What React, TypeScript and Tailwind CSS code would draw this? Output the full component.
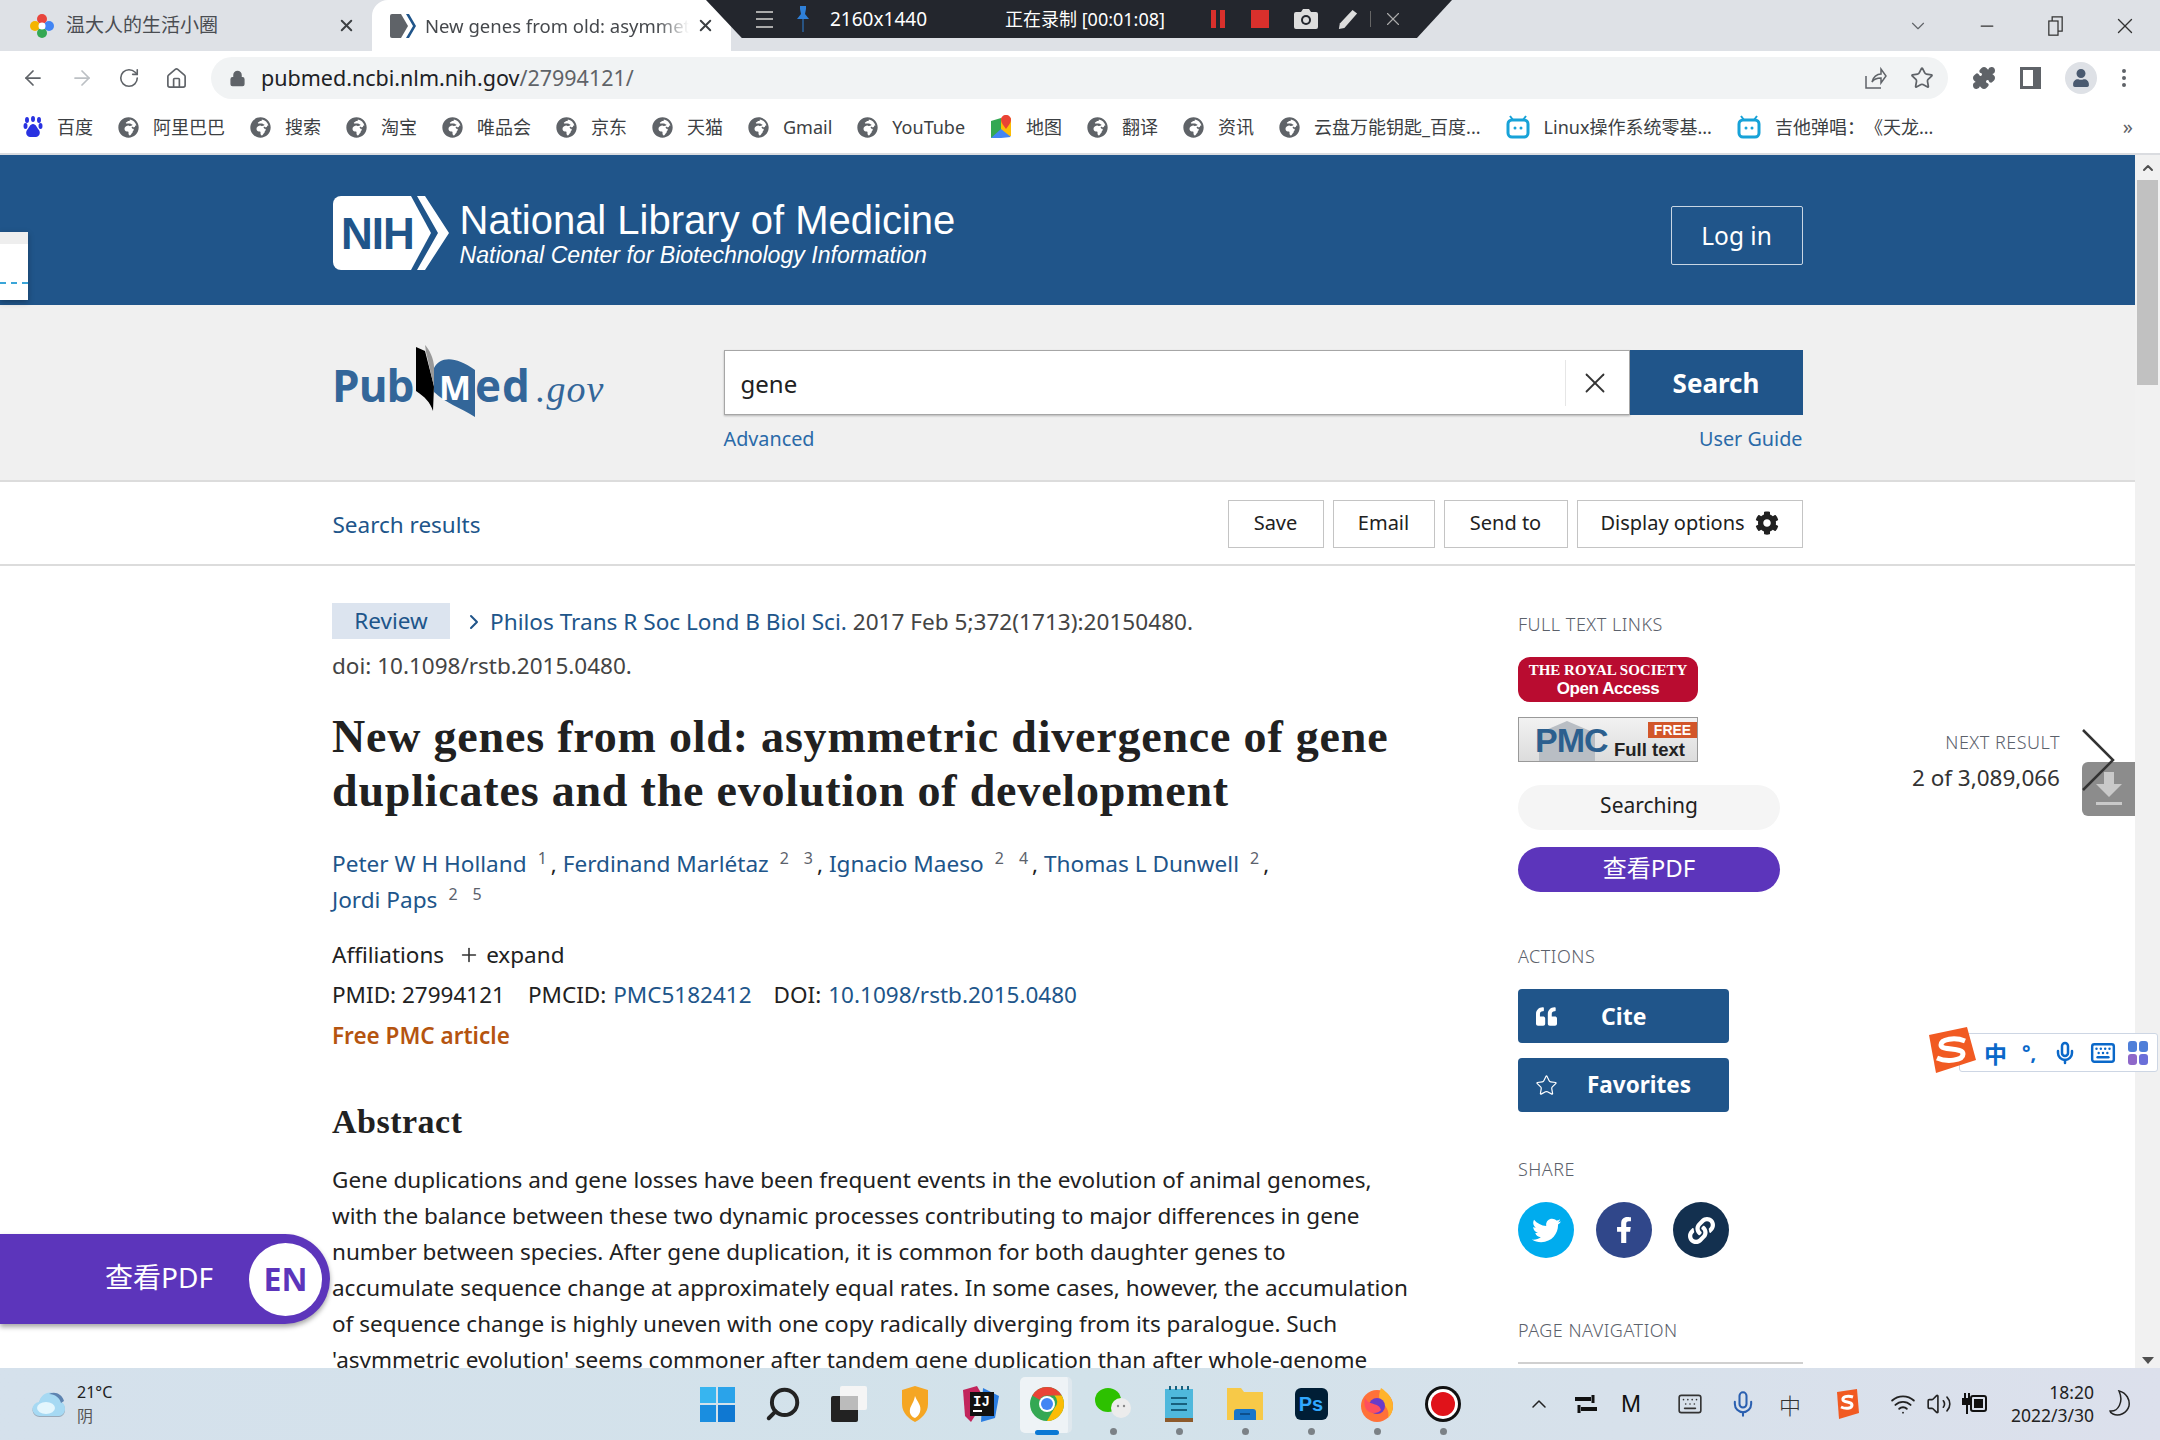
import React from "react";
import { ArrowLeft, ArrowRight, RotateCw, Home, Lock, Star, Puzzle, MoreVertical, X, Minus, ChevronDown, ChevronUp, ChevronRight, Plus, Wifi, Volume2, Mic, Keyboard, Search } from "lucide-react";
import { FaTwitter, FaFacebookF, FaLink, FaCog, FaGlobeAfrica, FaQuoteLeft, FaUser } from "react-icons/fa";

const bookmarks = [
  { label: "百度", icon: "baidu" },
  { label: "阿里巴巴" },
  { label: "搜索" },
  { label: "淘宝" },
  { label: "唯品会" },
  { label: "京东" },
  { label: "天猫" },
  { label: "Gmail" },
  { label: "YouTube" },
  { label: "地图", icon: "map" },
  { label: "翻译" },
  { label: "资讯" },
  { label: "云盘万能钥匙_百度..." },
  { label: "Linux操作系统零基...", icon: "bili" },
  { label: "吉他弹唱：《天龙...", icon: "bili" },
];

const BookmarkIcon = ({ icon }: { icon?: string }) => {
  if (icon === "baidu") {
    return (
      <svg width="20" height="22" viewBox="0 0 20 22" fill="#2932e1">
        <ellipse cx="4" cy="4" rx="2" ry="3" />
        <ellipse cx="10" cy="3" rx="2" ry="3" />
        <ellipse cx="16" cy="4" rx="2" ry="3" />
        <ellipse cx="2.5" cy="10" rx="2" ry="3" />
        <ellipse cx="17.5" cy="10" rx="2" ry="3" />
        <path d="M10 8c3 0 4 4 6 6 2 3 0 7-3 7H7c-3 0-5-4-3-7 2-2 3-6 6-6z" />
      </svg>
    );
  }
  if (icon === "map") {
    return (
      <svg width="22" height="24" viewBox="0 0 22 24">
        <path d="M1 6l10-3v18L1 23z" fill="#34a853" />
        <path d="M11 3l10 0v18H11z" fill="#fbbc05" />
        <path d="M1 23l10-9 10 8-10 1z" fill="#4285f4" />
        <path d="M16 0c3 0 5 2 5 5 0 3-3 6-5 9-2-3-5-6-5-9 0-3 2-5 5-5z" fill="#ea4335" />
      </svg>
    );
  }
  if (icon === "bili") {
    return (
      <svg width="24" height="24" viewBox="0 0 24 24" fill="none">
        <path d="M7 5L4 1M17 5l3-4" stroke="#17a2d8" strokeWidth="2" />
        <rect x="2" y="5" width="20" height="17" rx="4" stroke="#17a2d8" strokeWidth="3" />
        <circle cx="9" cy="13" r="1.5" fill="#17a2d8" />
        <circle cx="15" cy="13" r="1.5" fill="#17a2d8" />
      </svg>
    );
  }
  return <FaGlobeAfrica className="w-[21px] h-[21px] text-[#5f6368]" />;
};

const NihLogo = () => (
  <svg width="116" height="74" viewBox="0 0 116 74" className="shrink-0">
    <path d="M8 0H78L98 37 78 74H8a8 8 0 0 1-8-8V8a8 8 0 0 1 8-8z" fill="#fff" />
    <path d="M84 0h8l24 37-24 37h-8l21-37z" fill="#fff" />
    <text x="8" y="53" fontFamily="Liberation Sans" fontWeight="700" fontSize="44" letterSpacing="-1" fill="#20558a">NIH</text>
  </svg>
);

const PubMedLogo = () => (
  <svg width="280" height="85" viewBox="33 20 280 85" className="shrink-0 -mt-[10px]">
    <text x="32" y="82" fontFamily="Open Sans" fontWeight="700" fontSize="44" letterSpacing="-1" fill="#336699">Pub</text>
    <path d="M116 27l9 4 9 35-1 25c-3-9-8-14-17-20z" fill="#000" />
    <path d="M125 25c4 4 9 14 9 22v20l-8-35z" fill="#999" />
    <path d="M134 48c6-12 22-12 41 2v47c-14-9-30-14-41-25z" fill="#336699" />
    <text x="139" y="80" fontFamily="Open Sans" fontWeight="700" fontSize="34" fill="#fff">M</text>
    <text x="175" y="82" fontFamily="Open Sans" fontWeight="700" fontSize="44" letterSpacing="1" fill="#336699">ed</text>
    <text x="236" y="82" fontFamily="Liberation Serif" fontStyle="italic" fontSize="38" letterSpacing="1" fill="#336699">.gov</text>
  </svg>
);

const SideHeading = ({ children }: { children: React.ReactNode }) => (
  <h3 className="text-[18px] leading-[24px] font-light tracking-[0.5px] text-[#5b616b]">{children}</h3>
);

const Sup = ({ children }: { children: React.ReactNode }) => (
  <sup className="text-[16px] leading-none text-[#5b616b] ml-[11px] mr-[4px] top-[-8px]">{children}</sup>
);

const ToolButton = ({ children, width }: { children: React.ReactNode; width: string }) => (
  <button className={`h-[48px] ${width} border border-[#c4c4c4] bg-white text-[20px] text-[#212121] flex items-center justify-center gap-[10px] pb-[1px]`}>
    {children}
  </button>
);

const TaskSlot = ({ children }: { children: React.ReactNode }) => (
  <div className="w-[66px] h-full flex items-center justify-center relative">{children}</div>
);

const Dot = () => <span className="absolute bottom-[5px] w-[7px] h-[7px] rounded-full bg-[#7b8186]" />;

export default function App() {
  return (
    <div className="relative w-[2160px] h-[1440px] overflow-hidden flex flex-col bg-white font-['Noto_Sans','Noto_Sans_CJK_SC',sans-serif] text-[#212121]">
      {/* tab strip */}
      <div className="h-[51px] shrink-0 bg-[#dee1e6] flex items-end">
        <div className="w-[372px] h-[51px] flex items-center pl-[30px] pr-[16px]">
          <svg width="24" height="26" viewBox="0 0 24 26">
            <circle cx="12" cy="6" r="5" fill="#e8453c" />
            <circle cx="5" cy="13" r="5" fill="#f4b400" />
            <circle cx="19" cy="13" r="5" fill="#4285f4" />
            <circle cx="12" cy="20" r="5" fill="#34a853" />
            <circle cx="12" cy="13" r="3.5" fill="#fff" />
          </svg>
          <span className="ml-[12px] text-[19px] text-[#4a4d52]">温大人的生活小圈</span>
          <X className="ml-auto w-[19px] h-[19px] text-[#3c4043]" strokeWidth={2.5} />
        </div>
        <div className="w-[359px] h-[51px] bg-white rounded-t-[16px] flex items-center pl-[18px] pr-[16px]">
          <svg width="26" height="24" viewBox="0 0 26 24" className="shrink-0">
            <path d="M0 2a2 2 0 0 1 2-2h9l7 12-7 12H2a2 2 0 0 1-2-2z" fill="#5f6368" />
            <path d="M16 0h3l7 12-7 12h-3l7-12z" fill="#20558a" />
          </svg>
          <span className="ml-[9px] w-[264px] overflow-hidden whitespace-nowrap text-[18.5px] text-[#45484c] [mask-image:linear-gradient(to_right,black_88%,transparent)]">New genes from old: asymmetric</span>
          <X className="ml-auto w-[19px] h-[19px] text-[#3c4043]" strokeWidth={2.5} />
        </div>
        <div className="flex-1 h-[51px] flex items-center justify-end">
          <ChevronDown className="w-[22px] h-[22px] text-[#5f6368] mr-[48px]" strokeWidth={1.25} />
          <Minus className="w-[20px] h-[20px] text-[#333] mr-[51px]" strokeWidth={1.5} />
          <svg width="15" height="24" viewBox="0 0 18 24" fill="none" stroke="#333" strokeWidth="1.5" className="mr-[49px]">
            <rect x="1" y="6" width="11" height="17" />
            <path d="M5 6V1h12v17h-5" />
          </svg>
          <X className="w-[26px] h-[26px] text-[#333] mr-[22px]" strokeWidth={1.25} />
        </div>
      </div>

      {/* address bar */}
      <div className="h-[54px] shrink-0 bg-white flex items-center">
        <div className="w-[211px] flex items-center pl-[21px] gap-[25px]">
          <ArrowLeft className="w-[24px] h-[24px] text-[#5f6368]" strokeWidth={1.75} />
          <ArrowRight className="w-[24px] h-[24px] text-[#bcc0c4]" strokeWidth={1.75} />
          <RotateCw className="w-[22px] h-[22px] text-[#5f6368] ml-[-1px]" strokeWidth={1.75} />
          <Home className="w-[23px] h-[23px] text-[#5f6368]" strokeWidth={1.75} />
        </div>
        <div className="w-[1737px] h-[42px] bg-[#f1f3f4] rounded-full flex items-center pl-[18px] pr-[14px]">
          <Lock className="w-[17px] h-[17px] text-[#5f6368] fill-[#5f6368]" />
          <span className="ml-[15px] text-[21.5px] text-[#202124]">
            pubmed.ncbi.nlm.nih.gov<span className="text-[#5f6368]">/27994121/</span>
          </span>
          <svg width="24" height="24" viewBox="0 0 24 24" fill="none" stroke="#5f6368" strokeWidth="1.5" className="ml-auto mr-[23px]">
            <path d="M3 10v12h15M9 16c1-5 5-8 9-8V3l5 7-5 7v-5c-4 0-7 1-9 4z" />
          </svg>
          <Star className="w-[24px] h-[24px] text-[#5f6368]" strokeWidth={1.75} />
        </div>
        <div className="flex-1 flex items-center pl-[24px]">
          <Puzzle className="w-[24px] h-[24px] text-[#5f6368] fill-[#5f6368]" />
          <div className="ml-[24px] w-[21px] h-[22px] border-[3px] border-r-[8px] border-[#5f6368]" />
          <div className="ml-[24px] w-[32px] h-[32px] rounded-full bg-[#dee1e6] flex items-center justify-center">
            <FaUser className="w-[18px] h-[18px] text-[#4a5a70]" />
          </div>
          <MoreVertical className="ml-[15px] w-[24px] h-[24px] text-[#5f6368]" />
        </div>
      </div>

      {/* bookmarks */}
      <div className="h-[50px] shrink-0 bg-white border-b-2 border-[#dadce0] flex items-center pl-[23px] pb-[4px] relative">
        <div className="flex items-center gap-[25px]">
          {bookmarks.map((b) => (
            <div key={b.label} className="flex items-center gap-[14px] text-[18px] text-[#3c4043] whitespace-nowrap [text-spacing-trim:space-all]">
              <BookmarkIcon icon={b.icon} />
              <span>{b.label}</span>
            </div>
          ))}
        </div>
        <span className="ml-auto mr-[27px] text-[20px] text-[#5f6368]">»</span>
      </div>

      {/* page */}
      <div className="flex-1 min-h-0 flex">
        <div className="flex-1 min-w-0 overflow-hidden">
          <header className="h-[150px] bg-[#20558a]">
            <div className="mx-auto w-[1470px] h-full flex items-center pt-[6px]">
              <NihLogo />
              <div className="ml-[11px] text-white">
                <div className="font-['Liberation_Sans',sans-serif] text-[40px] leading-[44px]">National Library of Medicine</div>
                <div className="font-['Liberation_Sans',sans-serif] italic text-[23.1px] leading-[26px]">National Center for Biotechnology Information</div>
              </div>
              <button className="ml-auto mt-[4px] w-[132px] h-[59px] pt-[2px] border border-[#c9d6e3] text-white text-[24.5px] rounded-[2px]">Log in</button>
            </div>
          </header>

          <section className="h-[177px] bg-[#f0f0f0] border-b-2 border-[#dcdcdc] pt-[45px]">
            <div className="mx-auto w-[1470px] flex">
              <div className="w-[391px]">
                <PubMedLogo />
              </div>
              <div className="flex-1">
                <div className="flex h-[65px]">
                  <div className="flex-1 bg-white border border-[#a6a6a6] shadow-[0_1px_2px_rgba(0,0,0,0.25)] flex items-center pl-[16px]">
                    <span className="text-[24px] pt-[2px]">gene</span>
                    <div className="ml-auto w-[60px] h-[46px] border-l border-[#e6e6e6] flex items-center justify-center mr-[4px]">
                      <X className="w-[34px] h-[34px] text-[#333]" strokeWidth={1.25} />
                    </div>
                  </div>
                  <button className="w-[173px] bg-[#20558a] text-white font-bold text-[26px] pt-[2px]">Search</button>
                </div>
                <div className="flex justify-between mt-[10px] text-[19.8px] leading-[28px] text-[#2a6aa8]">
                  <span>Advanced</span>
                  <span>User Guide</span>
                </div>
              </div>
            </div>
          </section>

          <section className="h-[84px] border-b-2 border-[#dcdcdc]">
            <div className="mx-auto w-[1470px] h-full flex items-center pt-[1px]">
              <span className="text-[22.5px] pt-[2px] text-[#20558a]">Search results</span>
              <div className="ml-auto flex gap-[9px]">
                <ToolButton width="w-[96px]">Save</ToolButton>
                <ToolButton width="w-[102px]">Email</ToolButton>
                <ToolButton width="w-[124px]">Send to</ToolButton>
                <ToolButton width="w-[226px]">
                  Display options <FaCog className="w-[24px] h-[24px] text-[#212121]" />
                </ToolButton>
              </div>
            </div>
          </section>

          <div className="flex pl-[332px]">
            <main className="w-[1186px] pt-[38px]">
              <div className="flex items-center h-[36px]">
                <span className="-mt-[2px] w-[118px] h-[36px] bg-[#dce4ef] text-[#20558a] text-[22.5px] flex items-center justify-center">Review</span>
                <ChevronRight className="ml-[12px] w-[24px] h-[24px] text-[#20558a]" strokeWidth={2} />
                <span className="ml-[4px] text-[22.6px] whitespace-nowrap">
                  <span className="text-[#20558a]">Philos Trans R Soc Lond B Biol Sci.</span>{" "}
                  <span className="text-[#444]">2017 Feb 5;372(1713):20150480.</span>
                </span>
              </div>
              <div className="mt-[8px] h-[36px] text-[22.5px] leading-[36px] text-[#444]">doi: 10.1098/rstb.2015.0480.</div>
              <h1 className="mt-[26px] font-['Liberation_Serif',serif] font-bold text-[46px] leading-[54px] text-[#212121] tracking-[0.8px]">
                New genes from old: asymmetric divergence of gene
                <br />
                duplicates and the evolution of development
              </h1>
              <div className="mt-[28px] text-[22.6px] leading-[36px] text-[#212121]">
                <span className="text-[#20558a]">Peter W H Holland</span>
                <Sup>1</Sup>, <span className="text-[#20558a]">Ferdinand Marlétaz</span>
                <Sup>2</Sup>
                <Sup>3</Sup>, <span className="text-[#20558a]">Ignacio Maeso</span>
                <Sup>2</Sup>
                <Sup>4</Sup>, <span className="text-[#20558a]">Thomas L Dunwell</span>
                <Sup>2</Sup>,
                <br />
                <span className="text-[#20558a]">Jordi Paps</span>
                <Sup>2</Sup>
                <Sup>5</Sup>
              </div>
              <div className="mt-[19px] h-[36px] flex items-center text-[22.5px]">
                Affiliations
                <Plus className="ml-[14px] w-[22px] h-[22px] text-[#333]" strokeWidth={1.75} />
                <span className="ml-[6px]">expand</span>
              </div>
              <div className="mt-[4px] h-[36px] flex items-center text-[22.5px] whitespace-nowrap">
                <span>PMID: 27994121</span>
                <span className="ml-[23px]">PMCID:</span>
                <span className="ml-[7px] text-[#20558a]">PMC5182412</span>
                <span className="ml-[22px]">DOI:</span>
                <span className="ml-[7px] text-[#20558a]">10.1098/rstb.2015.0480</span>
              </div>
              <div className="mt-[5px] h-[36px] flex items-center text-[22.5px] font-semibold text-[#b5540f]">Free PMC article</div>
              <h2 className="mt-[46px] font-['Liberation_Serif',serif] font-bold text-[34px] leading-[44px] tracking-[0.5px]">Abstract</h2>
              <p className="mt-[18px] w-[1085px] text-[22.5px] leading-[36px] text-[#212121] whitespace-nowrap">
                Gene duplications and gene losses have been frequent events in the evolution of animal genomes,
                <br />
                with the balance between these two dynamic processes contributing to major differences in gene
                <br />
                number between species. After gene duplication, it is common for both daughter genes to
                <br />
                accumulate sequence change at approximately equal rates. In some cases, however, the accumulation
                <br />
                of sequence change is highly uneven with one copy radically diverging from its paralogue. Such
                <br />
                'asymmetric evolution' seems commoner after tandem gene duplication than after whole-genome
              </p>
            </main>

            <aside className="w-[285px] pt-[46px]">
              <SideHeading>FULL TEXT LINKS</SideHeading>
              <div className="mt-[21px] w-[180px] h-[45px] rounded-[12px] bg-[#b90c30] text-white flex flex-col items-center justify-center">
                <span className="font-['Liberation_Serif',serif] font-bold text-[15px] leading-[18px]">THE ROYAL SOCIETY</span>
                <span className="font-['Liberation_Sans',sans-serif] font-bold text-[17px] leading-[20px] tracking-[-0.4px]">Open Access</span>
              </div>
              <div className="relative mt-[15px] w-[180px] h-[45px] border border-[#999] bg-gradient-to-b from-[#f2f2f2] to-[#dcdcdc] overflow-hidden whitespace-nowrap">
                <svg width="60" height="44" viewBox="0 0 60 44" className="absolute left-[18px] top-0">
                  <path d="M2 15L30 3l28 12v29H2z" fill="#b9bec4" />
                </svg>
                <span className="absolute left-[16px] top-[2px] font-['Liberation_Sans',sans-serif] font-bold text-[34px] leading-[40px] tracking-[-1px] text-[#2c5f8e]">PMC</span>
                <span className="absolute left-[95px] top-[21px] font-['Liberation_Sans',sans-serif] font-bold text-[18.5px] leading-[22px] text-[#222]">Full text</span>
                <span className="absolute right-0 top-[4px] w-[49px] h-[16px] bg-[#d2562a] text-white font-['Liberation_Sans',sans-serif] font-bold text-[14px] leading-[16px] text-center">FREE</span>
              </div>
              <div className="mt-[23px] w-[262px] h-[45px] rounded-full bg-[#f5f5f5] text-[21px] pb-[4px] flex items-center justify-center">Searching</div>
              <div className="mt-[17px] w-[262px] h-[45px] rounded-full bg-[#5c35bb] text-white text-[24px] pb-[3px] flex items-center justify-center">查看PDF</div>
              <div className="mt-[52px]">
                <SideHeading>ACTIONS</SideHeading>
              </div>
              <button className="mt-[21px] w-[211px] h-[54px] rounded-[4px] bg-[#20558a] text-white font-bold text-[23px] flex items-center">
                <FaQuoteLeft className="ml-[18px] w-[21px] h-[21px]" />
                <span className="ml-[44px]">Cite</span>
              </button>
              <button className="mt-[15px] w-[211px] h-[54px] rounded-[4px] bg-[#20558a] text-white font-bold text-[22.5px] flex items-center">
                <Star className="ml-[17px] w-[23px] h-[23px]" strokeWidth={1.25} />
                <span className="ml-[29px]">Favorites</span>
              </button>
              <div className="mt-[45px]">
                <SideHeading>SHARE</SideHeading>
              </div>
              <div className="mt-[21px] flex justify-between w-[211px]">
                <div className="w-[56px] h-[56px] rounded-full bg-[#00acee] flex items-center justify-center">
                  <FaTwitter className="w-[29px] h-[29px] text-white" />
                </div>
                <div className="w-[56px] h-[56px] rounded-full bg-[#30478a] flex items-center justify-center">
                  <FaFacebookF className="w-[26px] h-[26px] text-white" />
                </div>
                <div className="w-[56px] h-[56px] rounded-full bg-[#13304f] flex items-center justify-center">
                  <FaLink className="w-[27px] h-[27px] text-white" />
                </div>
              </div>
              <div className="mt-[60px]">
                <SideHeading>PAGE NAVIGATION</SideHeading>
              </div>
              <div className="mt-[20px] h-[2px] bg-[#d0d0d0]" />
            </aside>

            <div className="flex-1 flex justify-end pt-[163px]">
              <div className="text-right">
                <div className="text-[18px] leading-[26px] font-light tracking-[0.5px] text-[#5b616b]">NEXT RESULT</div>
                <div className="mt-[6px] text-[22.5px] leading-[34px] text-[#333]">2 of 3,089,066</div>
              </div>
              <svg width="34" height="62" viewBox="0 0 34 62" fill="none" stroke="#333" strokeWidth="2.5" className="relative z-10 ml-[21px] mr-[20px]">
                <path d="M2 1l30 30L2 61" />
              </svg>
            </div>
          </div>
        </div>

        {/* scrollbar */}
        <div className="w-[25px] shrink-0 bg-[#f1f1f1] flex flex-col items-center pt-[5px]">
          <ChevronUp className="w-[16px] h-[16px] text-[#505050]" strokeWidth={3} />
          <div className="mt-[4px] w-[21px] h-[205px] bg-[#c1c1c1]" />
          <div className="mt-auto mb-[4px] w-0 h-0 border-x-[6px] border-x-transparent border-t-[7px] border-t-[#505050]" />
        </div>
      </div>

      {/* taskbar */}
      <footer className="h-[72px] shrink-0 bg-gradient-to-r from-[#d5e1ec] via-[#d2e2ea] to-[#dce0ec] flex items-center">
        <div className="w-[684px] h-full flex items-center pl-[32px]">
          <svg width="34" height="28" viewBox="0 0 34 28">
            <path d="M8 27a7 7 0 0 1-1-14C9 6 15 2 21 4c5 1 8 5 8 9 3 1 4 4 4 7 0 4-3 7-6 7z" fill="#9aa9b8" />
            <path d="M8 26a7 7 0 0 1-1-14C9 5 15 1 21 3c5 1 8 5 8 9 3 1 4 4 4 7 0 4-3 7-6 7z" fill="#a6d9f3" />
            <ellipse cx="14" cy="18" rx="9" ry="6" fill="#e4f6fd" />
            <path d="M17 4c6-3 13 0 15 7l-3 2c-1-5-6-9-12-9z" fill="#5d83b0" />
          </svg>
          <div className="ml-[11px]">
            <div className="text-[16px] leading-[24px] text-[#222]">21°C</div>
            <div className="text-[16px] leading-[24px] text-[#555]">阴</div>
          </div>
        </div>
        <div className="flex h-full">
          <TaskSlot>
            <div className="grid grid-cols-2 gap-[2px] w-[35px] h-[35px]">
              <span className="bg-[#37b5f0]" />
              <span className="bg-[#2aa3ea]" />
              <span className="bg-[#1a8ee0]" />
              <span className="bg-[#0f78d2]" />
            </div>
          </TaskSlot>
          <TaskSlot>
            <Search className="w-[38px] h-[38px] text-[#222] -scale-x-100" strokeWidth={2.5} />
          </TaskSlot>
          <TaskSlot>
            <svg width="36" height="36" viewBox="0 0 36 36">
              <rect x="9" y="0" width="27" height="24" rx="2" fill="#f5f5f5" />
              <rect x="0" y="10" width="27" height="26" rx="2" fill="#222" />
              <rect x="9" y="10" width="18" height="14" fill="#bbb" />
            </svg>
          </TaskSlot>
          <TaskSlot>
            <svg width="30" height="36" viewBox="0 0 30 36">
              <path d="M2 4l13-4 13 4v14c0 9-7 15-13 18C9 33 2 27 2 18z" fill="#f5a623" />
              <path d="M15 10c2 6 7 9 5 16-1 3-3 5-5 6-3-1-6-4-5-9 1-4 4-7 5-13z" fill="#fff" />
            </svg>
          </TaskSlot>
          <TaskSlot>
            <svg width="36" height="36" viewBox="0 0 36 36">
              <path d="M0 4l14-4 8 14-14 22L2 30z" fill="#c2255c" />
              <path d="M20 2l16 8-4 22-14 4z" fill="#2a7de1" />
              <rect x="7" y="6" width="24" height="24" fill="#111" />
              <text x="10" y="20" fontFamily="Liberation Mono" fontWeight="700" fontSize="14" fill="#fff">IJ</text>
              <rect x="10" y="24" width="9" height="2" fill="#fff" />
            </svg>
          </TaskSlot>
          <TaskSlot>
            <div className="absolute left-[6px] top-[9px] w-[52px] h-[56px] rounded-[5px] bg-[#eef3f6] border-r-4 border-[#dfe8ee]" />
            <svg width="34" height="34" viewBox="0 0 34 34" className="relative">
              <circle cx="17" cy="17" r="17" fill="#34a853" />
              <path d="M17 0a17 17 0 0 1 14.7 8.5H17a8.5 8.5 0 0 0-7.4 4.3L2.3 8.5A17 17 0 0 1 17 0z" fill="#ea4335" />
              <path d="M31.7 8.5A17 17 0 0 1 17 34l7.4-12.8A8.5 8.5 0 0 0 24.4 8.5z" fill="#fbbc05" />
              <circle cx="17" cy="17" r="8" fill="#fff" />
              <circle cx="17" cy="17" r="6" fill="#4285f4" />
            </svg>
            <span className="absolute bottom-[5px] w-[24px] h-[5px] rounded-full bg-[#0a78d4]" />
          </TaskSlot>
          <TaskSlot>
            <svg width="36" height="32" viewBox="0 0 36 32">
              <ellipse cx="13" cy="12" rx="13" ry="12" fill="#2dc100" />
              <ellipse cx="26" cy="20" rx="10" ry="10" fill="#ececec" />
              <circle cx="23" cy="18" r="1.2" fill="#888" />
              <circle cx="29" cy="18" r="1.2" fill="#888" />
            </svg>
            <Dot />
          </TaskSlot>
          <TaskSlot>
            <svg width="28" height="36" viewBox="0 0 28 36">
              <rect x="0" y="3" width="28" height="29" fill="#4fb8dc" />
              <rect x="0" y="32" width="28" height="4" fill="#8d5a2b" />
              <path d="M6 12h16M6 18h16M6 24h16" stroke="#17607e" strokeWidth="2" />
              <path d="M5 0v4M11 0v4M17 0v4M23 0v4" stroke="#17607e" strokeWidth="2" />
            </svg>
            <Dot />
          </TaskSlot>
          <TaskSlot>
            <svg width="36" height="32" viewBox="0 0 36 32">
              <path d="M0 0h14l3 4h19v28H0z" fill="#f7c948" />
              <path d="M7 32v-8a3 3 0 0 1 3-3h16a3 3 0 0 1 3 3v8z" fill="#1976c8" />
              <rect x="13" y="25" width="10" height="2" fill="#0d4f8c" />
            </svg>
            <Dot />
          </TaskSlot>
          <TaskSlot>
            <div className="w-[33px] h-[32px] rounded-[6px] bg-[#001e36] flex items-center justify-center font-['Liberation_Sans',sans-serif] font-bold text-[20px] text-[#31a8ff]">Ps</div>
            <Dot />
          </TaskSlot>
          <TaskSlot>
            <svg width="36" height="36" viewBox="0 0 36 36">
              <circle cx="18" cy="20" r="16" fill="#ff7139" />
              <path d="M22 2c6 4 12 10 12 18 0 5-2 9-5 12 2-8-3-13-7-16-3-3-2-9 0-14z" fill="#ffb32c" />
              <circle cx="18" cy="20" r="8" fill="#6a3bc9" />
              <path d="M6 12c4 8 14 4 16 12-3 4-12 4-15-1-2-3-2-8-1-11z" fill="#ff4f5e" />
            </svg>
            <Dot />
          </TaskSlot>
          <TaskSlot>
            <svg width="36" height="36" viewBox="0 0 36 36">
              <circle cx="18" cy="18" r="18" fill="#111" />
              <circle cx="18" cy="18" r="15" fill="#fff" />
              <circle cx="18" cy="18" r="12" fill="#e0131a" />
            </svg>
            <Dot />
          </TaskSlot>
        </div>
        <div className="flex-1 h-full flex items-center">
          <ChevronUp className="ml-[51px] w-[24px] h-[24px] text-[#222]" strokeWidth={1.5} />
          <svg width="22" height="20" viewBox="0 0 22 20" className="ml-[24px]">
            <path d="M0 5h16M6 15h16" stroke="#111" strokeWidth="4" />
            <path d="M18 1v8M4 11v8" stroke="#111" strokeWidth="3" />
          </svg>
          <span className="ml-[24px] w-[24px] font-['Liberation_Sans',sans-serif] text-[24px] leading-[24px] text-[#111]">M</span>
          <Keyboard className="ml-[32px] w-[26px] h-[26px] text-[#333]" strokeWidth={1.5} />
          <Mic className="ml-[26px] w-[28px] h-[30px] text-[#2a5fb0]" strokeWidth={1.75} />
          <div className="ml-[21px] w-[24px] h-[32px] flex items-center justify-center font-['Noto_Sans_CJK_SC',sans-serif] font-light text-[22px] text-[#333]">中</div>
          <svg width="24" height="30" viewBox="0 0 24 30" className="ml-[33px]">
            <path d="M2 3l20-3 2 24-20 6z" fill="#f15a22" />
            <path d="M18 8c-6-2-11 0-10 3 1 3 9 1 9 5s-7 4-11 2" fill="none" stroke="#fff" strokeWidth="3" />
          </svg>
          <Wifi className="ml-[31px] w-[26px] h-[26px] text-[#222]" strokeWidth={1.75} />
          <Volume2 className="ml-[10px] w-[26px] h-[26px] text-[#222]" strokeWidth={1.5} />
          <svg width="26" height="22" viewBox="0 0 26 22" className="ml-[10px]">
            <path d="M3 0v6M7 0v6M1 6h8v5H1zM5 11v10" stroke="#111" strokeWidth="2" fill="#111" />
            <rect x="9" y="3" width="15" height="15" rx="2" fill="none" stroke="#111" strokeWidth="2" />
            <rect x="12" y="6" width="9" height="9" fill="#111" />
          </svg>
          <div className="ml-auto text-right text-[17.5px] leading-[23px] text-[#222]">
            <div>18:20</div>
            <div>2022/3/30</div>
          </div>
          <svg width="22" height="28" viewBox="0 0 22 28" fill="none" stroke="#222" strokeWidth="1.5" className="ml-[15px] mr-[29px]">
            <path d="M10 1c8 2 11 9 10 15-2 7-10 11-16 8-2-1-3-2-3-3 8 1 14-9 9-20z" />
          </svg>
        </div>
      </footer>

      {/* screen recorder bar */}
      <div className="absolute left-[706px] top-0 w-[746px] h-[38px] bg-[#23262d] [clip-path:polygon(0_0,100%_0,95.3%_100%,4.8%_100%)] flex items-center text-white">
        <div className="ml-[50px] w-[17px] h-[17px] flex flex-col justify-between">
          <span className="h-[2px] bg-[#aaa]" />
          <span className="h-[2px] bg-[#aaa]" />
          <span className="h-[2px] bg-[#aaa]" />
        </div>
        <svg width="12" height="26" viewBox="0 0 12 26" className="ml-[24px]">
          <path d="M3 0h6v3l-1 5 4 5H0l4-5-1-5zM5.5 13h1v13h-1z" fill="#2f80d8" />
        </svg>
        <span className="ml-[21px] text-[19px]">2160x1440</span>
        <span className="ml-[78px] text-[18px] whitespace-nowrap">正在录制 [00:01:08]</span>
        <div className="ml-[46px] flex gap-[4px]">
          <span className="w-[5px] h-[18px] bg-[#d9302c]" />
          <span className="w-[5px] h-[18px] bg-[#d9302c]" />
        </div>
        <span className="ml-[26px] w-[18px] h-[18px] bg-[#d9302c]" />
        <svg width="24" height="20" viewBox="0 0 24 20" className="ml-[25px]">
          <path d="M2 3h5l2-3h6l2 3h5a2 2 0 0 1 2 2v13a2 2 0 0 1-2 2H2a2 2 0 0 1-2-2V5a2 2 0 0 1 2-2z" fill="#ddd" />
          <circle cx="12" cy="11" r="5" fill="#23262d" />
          <circle cx="12" cy="11" r="3" fill="#ddd" />
        </svg>
        <svg width="20" height="22" viewBox="0 0 22 22" className="ml-[20px]">
          <path d="M16 1l5 4L7 21l-6 1 1-6z" fill="#ddd" />
        </svg>
        <span className="ml-[12px] w-[1px] h-[16px] bg-[#666]" />
        <X className="ml-[11px] w-[22px] h-[22px] text-[#aaa]" strokeWidth={1.25} />
      </div>

      {/* side tab peeking in from the left */}
      <div className="absolute left-0 top-[232px] w-[28px] h-[68px] bg-white shadow-[0_2px_6px_rgba(0,0,0,0.3)] flex flex-col">
        <div className="h-[12px] bg-[#eeeeee]" />
        <div className="mt-[38px] h-[4px] border-t-2 border-dashed border-[#3aa5d8]" />
      </div>

      {/* floating PDF button */}
      <div className="absolute left-0 top-[1234px] w-[330px] h-[90px] rounded-r-[45px] bg-[#5c35bb] shadow-[0_3px_5px_rgba(0,0,0,0.35)] flex items-center">
        <span className="ml-[105px] text-[28px] pb-[4px] text-white">查看PDF</span>
        <div className="ml-auto mr-[8px] w-[73px] h-[73px] rounded-full bg-white flex items-center justify-center text-[32px] font-bold text-[#5c35bb]">EN</div>
      </div>

      {/* download tab */}
      <div className="absolute left-[2082px] top-[762px] w-[53px] h-[54px] rounded-l-[6px] bg-[#8c8c8c] flex flex-col items-center justify-center">
        <svg width="28" height="36" viewBox="0 0 28 36">
          <path d="M9 1h10v12h8L14 26 1 13h8zM1 31h26v3H1z" fill="#c9c9c9" />
        </svg>
      </div>

      {/* IME toolbar */}
      <div className="absolute left-[1929px] top-[1027px] w-[229px] h-[45px]">
        <div className="absolute left-[30px] right-0 top-[6px] bottom-0 rounded-[3px] bg-white border border-[#cdd6e4] flex items-center pl-[24px] text-[#0a68c9]">
          <span className="font-['Noto_Sans_CJK_SC',sans-serif] font-bold text-[23px] leading-[30px]">中</span>
          <span className="ml-[15px] text-[20px] font-bold leading-[20px]">°,</span>
          <Mic className="ml-[17px] w-[24px] h-[26px]" strokeWidth={2.5} />
          <Keyboard className="ml-[13px] w-[26px] h-[26px]" strokeWidth={2.25} />
          <div className="ml-[12px] grid grid-cols-2 gap-[2px] w-[20px]">
            <span className="h-[11px] rounded-[3px] bg-[#4f7fd9]" />
            <span className="h-[11px] rounded-[3px] bg-[#4f7fd9]" />
            <span className="h-[11px] rounded-[3px] bg-[#8e68c9]" />
            <span className="h-[11px] rounded-[3px] bg-[#6a6fd9]" />
          </div>
        </div>
        <svg width="48" height="46" viewBox="0 0 48 46" className="absolute left-0 top-0">
          <path d="M0 8L38 0l9 33-40 13z" fill="#f15a22" />
          <path d="M36 14c-10-4-24-2-24 4s22 2 22 9-17 8-26 4" fill="none" stroke="#fff" strokeWidth="5" />
        </svg>
      </div>
    </div>
  );
}
